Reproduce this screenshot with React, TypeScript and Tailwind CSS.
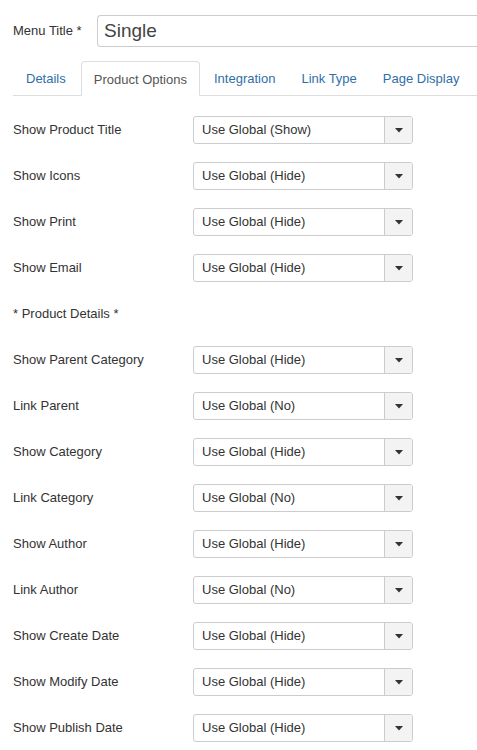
const tabs = ['Details', 'Product Options', 'Integration', 'Link Type', 'Page Display'];

type Row = { label: string; value?: string; heading?: boolean };

const rows: Row[] = [
  { label: 'Show Product Title', value: 'Use Global (Show)' },
  { label: 'Show Icons', value: 'Use Global (Hide)' },
  { label: 'Show Print', value: 'Use Global (Hide)' },
  { label: 'Show Email', value: 'Use Global (Hide)' },
  { label: '* Product Details *', heading: true },
  { label: 'Show Parent Category', value: 'Use Global (Hide)' },
  { label: 'Link Parent', value: 'Use Global (No)' },
  { label: 'Show Category', value: 'Use Global (Hide)' },
  { label: 'Link Category', value: 'Use Global (No)' },
  { label: 'Show Author', value: 'Use Global (Hide)' },
  { label: 'Link Author', value: 'Use Global (No)' },
  { label: 'Show Create Date', value: 'Use Global (Hide)' },
  { label: 'Show Modify Date', value: 'Use Global (Hide)' },
  { label: 'Show Publish Date', value: 'Use Global (Hide)' },
];

function Select({ value }: { value: string }) {
  return (
    <div className="flex h-[28px] w-[220px] rounded-[3px] border border-[#cccccc] bg-white overflow-hidden">
      <div className="flex-1 flex items-center pl-[8px] text-[13px] text-[#333333]">{value}</div>
      <div className="w-[28px] border-l border-[#cccccc] bg-[#f3f3f3] flex items-center justify-center">
        <svg width="8" height="5" viewBox="0 0 8 5">
          <path d="M0 0 L8 0 L4 4.5 Z" fill="#333333" />
        </svg>
      </div>
    </div>
  );
}

export default function App() {
  return (
    <div className="w-[477px] h-[750px] overflow-hidden bg-white font-['Liberation_Sans',Arial,sans-serif] text-[13px] text-[#333333]">
      <div className="pl-[13px] pt-[15px]">
        <div className="flex items-center h-[32px]">
          <div className="w-[84px]">Menu Title *</div>
          <div className="flex-1 h-[32px] rounded-l-[4px] border border-r-0 border-[#cccccc] flex items-center pl-[6px] text-[19px] text-[#444444]">
            Single
          </div>
        </div>

        <div className="mt-[14px] flex h-[35px] border-b border-[#dddddd] items-end whitespace-nowrap">
          {tabs.map((t) => {
            const active = t === 'Product Options';
            return (
              <div
                key={t}
                className={
                  active
                    ? 'shrink-0 h-[35px] -mb-px px-[12px] pt-[2px] ml-[2px] mr-[1px] flex items-center rounded-t-[4px] border border-[#dddddd] border-b-white bg-white text-[#555555]'
                    : 'shrink-0 h-[34px] px-[13px] pt-[2px] flex items-center text-[#2f6fa8]'
                }
              >
                {t}
              </div>
            );
          })}
        </div>

        <div className="pt-[20px]">
          {rows.map((r) => (
            <div key={r.label} className="flex items-center h-[28px] mb-[18px]">
              <div className="w-[180px]">{r.label}</div>
              {!r.heading && r.value && <Select value={r.value} />}
            </div>
          ))}
        </div>
      </div>
    </div>
  );
}
